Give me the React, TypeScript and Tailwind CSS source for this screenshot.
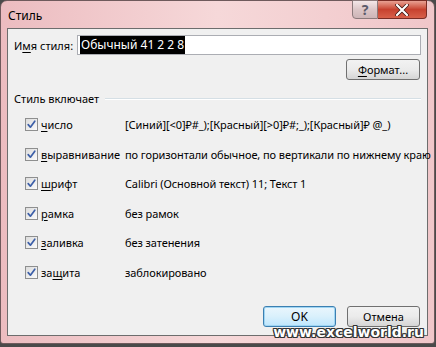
import React from "react";

const font = { fontFamily: '"Noto Sans", "Open Sans", Arial, sans-serif' };

function Check() {
  return (
    <div className="w-[13px] h-[13px] border border-[#8e8f8f] bg-gradient-to-br from-[#dcdcdc] to-[#fbfbfb] flex items-center justify-center">
      <svg width="9" height="9" viewBox="0 0 9 9">
        <path d="M1.2 4.6 L3.4 7.2 L7.8 1.2" stroke="#3c5fa8" strokeWidth="1.7" fill="none" strokeLinecap="round" strokeLinejoin="round" />
      </svg>
    </div>
  );
}

function Row({ pre, u, post, value }: { pre: string; u: string; post: string; value: string }) {
  return (
    <div className="flex items-center h-[29.5px]">
      <div className="w-[26px] shrink-0 pl-[11px]"><Check /></div>
      <div className="w-[85px] shrink-0 pl-[1px] whitespace-nowrap">
        {pre}
        <span className="underline underline-offset-2">{u}</span>
        {post}
      </div>
      <div className="whitespace-nowrap tracking-[-0.08px]">{value}</div>
    </div>
  );
}

export default function App() {
  return (
    <div className="w-[436px] h-[347px] bg-[#4a4a4a] text-[11px] text-black leading-none overflow-hidden" style={font}>
      <div className="w-[435px] h-[344px] rounded-t-[7px] rounded-b-[3px] border border-[#6f5a5c] bg-gradient-to-r from-[#ecbcc0] via-[#f6d8d9] to-[#f0c6c9] flex flex-col relative">
        <div className="h-[27px] flex items-start pl-[7px] pr-[7px]">
          <div className="mt-[9px] text-[12px] text-black">Стиль</div>
          <div className="ml-auto flex h-[19px] -mt-[1px]">
            <div className="w-[26px] h-[19px] border border-[#8c7a7b] rounded-bl-[4px] bg-gradient-to-b from-[#f4e7e8] via-[#dcc6c7] to-[#ceb5b7] flex items-center justify-center text-[#5b5b6b] text-[14px] font-bold">?</div>
            <div className="w-[49px] h-[19px] border border-[#7a2c25] border-l-0 rounded-br-[4px] bg-gradient-to-b from-[#e8a093] via-[#c7412f] to-[#d8604a] flex items-center justify-center">
              <svg width="14" height="12" viewBox="0 0 14 12">
                <path d="M2 1 L12 11 M12 1 L2 11" stroke="#3a1410" strokeWidth="3.6" strokeLinecap="round" />
                <path d="M2 1 L12 11 M12 1 L2 11" stroke="#ffffff" strokeWidth="2.2" strokeLinecap="round" />
              </svg>
            </div>
          </div>
        </div>
        <div className="mx-[6px] mb-[7px] flex-1 border border-[#6d6d6d] bg-[#f0f0f0] flex flex-col pl-[6px] pr-[6px]">
          <div className="flex items-center mt-[6px] h-[20px]">
            <div className="w-[63px] shrink-0 whitespace-nowrap">
              И<span className="underline underline-offset-2">м</span>я стиля:
            </div>
            <div className="flex-1 h-[20px] border border-[#abadb3] bg-white flex items-center pl-[2px]">
              <span className="bg-black text-white px-[1px] py-[3px] text-[12px]">Обычный 41 2 2 8</span>
            </div>
          </div>
          <div className="flex justify-end mt-[4px] pr-[1px]">
            <div className="w-[74px] h-[21px] border border-[#707070] rounded-[3px] bg-gradient-to-b from-[#f2f2f2] via-[#ebebeb] to-[#d5d5d5] flex items-center justify-center">
              <span className="underline underline-offset-2">Ф</span>ормат...
            </div>
          </div>
          <div className="flex items-center mt-[13px]">
            <div className="pr-[6px] whitespace-nowrap">Стиль включает</div>
            <div className="flex-1 h-[2px] border-t border-[#d5dfe5] border-b border-b-white"></div>
          </div>
          <div className="flex flex-col mt-[6px]">
            <Row pre="" u="ч" post="исло" value="[Синий][<0]₽#_);[Красный][>0]₽#;_);[Красный]₽ @_)" />
            <Row pre="" u="в" post="ыравнивание" value="по горизонтали обычное, по вертикали по нижнему краю" />
            <Row pre="" u="ш" post="рифт" value="Calibri (Основной текст) 11; Текст 1" />
            <Row pre="" u="р" post="амка" value="без рамок" />
            <Row pre="" u="з" post="аливка" value="без затенения" />
            <Row pre="за" u="щ" post="ита" value="заблокировано" />
          </div>
          <div className="flex justify-end gap-[11px] mt-auto mb-[8px] pr-[1px]">
            <div className="w-[73px] h-[21px] border border-[#3c7fb1] rounded-[3px] bg-gradient-to-b from-[#eaf6fd] via-[#d9f0fc] to-[#bee6fd] shadow-[inset_0_0_0_1px_#9fd5f3] flex items-center justify-center text-[12px]">OK</div>
            <div className="w-[73px] h-[21px] border border-[#707070] rounded-[3px] bg-gradient-to-b from-[#f2f2f2] via-[#ebebeb] to-[#d5d5d5] flex items-center justify-center">Отмена</div>
          </div>
        </div>
        <div
          className="absolute right-[10px] bottom-[4px] text-[14px] font-bold text-white"
          style={{ fontFamily: '"DejaVu Sans", Verdana, sans-serif', textShadow: "1px 1px 0 #333, -1px -1px 0 #333, 1px -1px 0 #333, -1px 1px 0 #333, 0 1px 0 #333, 1px 0 0 #333, 0 -1px 0 #333, -1px 0 0 #333" }}
        >
          www.excelworld.ru
        </div>
      </div>
    </div>
  );
}
